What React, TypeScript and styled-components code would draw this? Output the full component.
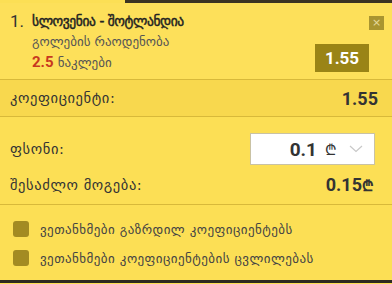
import React from "react";
import styled, { createGlobalStyle } from "styled-components";

const Global = createGlobalStyle`
  html, body { margin: 0; padding: 0; background: #fcdf55; }
  body { font-family: Roboto, "DejaVu Sans", sans-serif; }
  * { box-sizing: border-box; }
`;

const Panel = styled.div`
  width: 392px;
  height: 284px;
  background: #fcdf55;
  display: flex;
  flex-direction: column;
  overflow: hidden;
`;

const TopStrip = styled.div`
  display: flex;
  height: 3px;
`;

const StripPart = styled.div<{ $dark?: boolean; $w?: number }>`
  background: ${(p) => (p.$dark ? "#3b3322" : "#fcdf55")};
  flex: ${(p) => (p.$w ? `0 0 ${p.$w}px` : "1")};
`;

const Event = styled.div`
  display: flex;
  height: 77px;
  padding: 8px 8px 0 10px;
  border-bottom: 1px solid #d8b93a;
  background: #fde05a;
`;

const Num = styled.div`
  font-size: 17px;
  color: #333;
  width: 22px;
  line-height: 21px;
`;

const EventInfo = styled.div`
  flex: 1;
  display: flex;
  flex-direction: column;
`;

const Title = styled.div`
  font-family: "DejaVu Sans", sans-serif;
  font-size: 13.5px;
  color: #222;
  line-height: 21px;
  letter-spacing: -0.4px;
  -webkit-text-stroke: 0.45px #222;
`;

const Sub = styled.div`
  font-family: "DejaVu Sans", sans-serif;
  font-size: 13px;
  color: #555;
  line-height: 20px;
`;

const Red = styled.span`
  font-family: Roboto, sans-serif;
  font-weight: bold;
  color: #c8381f;
  font-size: 15px;
`;

const Side = styled.div`
  display: flex;
  flex-direction: column;
  align-items: flex-end;
  gap: 14px;
`;

const Close = styled.div`
  width: 15px;
  height: 14px;
  background: #a99530;
  color: #e6da9c;
  font-size: 11px;
  line-height: 14px;
  text-align: center;
  font-family: "DejaVu Sans", sans-serif;
  margin-top: 5px;
`;

const Odds = styled.div`
  width: 54px;
  height: 28px;
  background: #9a8416;
  color: #fff;
  font-family: Roboto, sans-serif;
  font-weight: bold;
  font-size: 17px;
  display: flex;
  align-items: center;
  justify-content: center;
  margin-right: 15px;
`;

const Row = styled.div<{ $h: number; $bg?: string; $border?: boolean }>`
  display: flex;
  align-items: center;
  justify-content: space-between;
  height: ${(p) => p.$h}px;
  padding: 0 14px 0 10px;
  background: ${(p) => p.$bg || "#fcdf55"};
  border-bottom: ${(p) => (p.$border ? "1px solid #d8b93a" : "none")};
`;

const StakeRow = styled.div`
  display: flex;
  align-items: center;
  justify-content: space-between;
  padding: 16px 17px 0 10px;
`;

const Label = styled.div`
  font-family: "DejaVu Sans", sans-serif;
  font-size: 14.5px;
  color: #333;
  letter-spacing: 0.6px;
`;

const Value = styled.div`
  font-family: Roboto, "DejaVu Sans", sans-serif;
  font-weight: bold;
  font-size: 18px;
  color: #333;
  display: flex;
  align-items: center;
`;

const StakeBox = styled.div`
  width: 125px;
  height: 32px;
  background: #fff;
  border: 1px solid #c9c2a4;
  display: flex;
  align-items: center;
  justify-content: flex-end;
  padding-right: 11px;
  gap: 8px;
`;

const Amount = styled.span`
  font-family: Roboto, sans-serif;
  font-weight: bold;
  font-size: 19px;
  color: #333;
`;

const Lari = styled.span`
  font-family: "DejaVu Sans", sans-serif;
  font-size: 15px;
  color: #333;
  margin-right: 4px;
`;

const Checks = styled.div`
  display: flex;
  flex-direction: column;
  gap: 13px;
  padding: 16px 0 0 13px;
  flex: 1;
`;

const CheckRow = styled.div`
  display: flex;
  align-items: center;
  gap: 11px;
`;

const Box = styled.div`
  width: 16px;
  height: 16px;
  border-radius: 3px;
  background: #a38b22;
`;

const CheckText = styled.div`
  font-family: "DejaVu Sans", sans-serif;
  font-size: 13px;
  color: #444;
  letter-spacing: 0.45px;
`;

const Bottom = styled.div`
  height: 3px;
  background: #2e2a20;
  margin-bottom: 1px;
`;

const Chevron = () => (
  <svg width="14" height="8" viewBox="0 0 14 8" fill="none">
    <path d="M1 1l6 5.5L13 1" stroke="#c8c8c8" strokeWidth="1.2" />
  </svg>
);

export default function App() {
  return (
    <>
      <Global />
      <Panel>
        <TopStrip>
          <StripPart $w={125} />
          <StripPart $dark />
        </TopStrip>
        <Event>
          <Num>1.</Num>
          <EventInfo>
            <Title>სლოვენია - შოტლანდია</Title>
            <Sub>გოლების რაოდენობა</Sub>
            <Sub>
              <Red>2.5</Red> ნაკლები
            </Sub>
          </EventInfo>
          <Side>
            <Close>×</Close>
            <Odds>1.55</Odds>
          </Side>
        </Event>
        <Row $h={37} $bg="#f8d84e" $border>
          <Label>კოეფიციენტი:</Label>
          <Value>1.55</Value>
        </Row>
        <StakeRow>
          <Label>ფსონი:</Label>
          <StakeBox>
            <Amount>0.1</Amount>
            <Lari>₾</Lari>
            <Chevron />
          </StakeBox>
        </StakeRow>
        <Row $h={40} $border>
          <Label>შესაძლო მოგება:</Label>
          <Value>
            0.15<Lari>₾</Lari>
          </Value>
        </Row>
        <Checks>
          <CheckRow>
            <Box />
            <CheckText>ვეთანხმები გაზრდილ კოეფიციენტებს</CheckText>
          </CheckRow>
          <CheckRow>
            <Box />
            <CheckText>ვეთანხმები კოეფიციენტების ცვლილებას</CheckText>
          </CheckRow>
        </Checks>
        <Bottom />
      </Panel>
    </>
  );
}
